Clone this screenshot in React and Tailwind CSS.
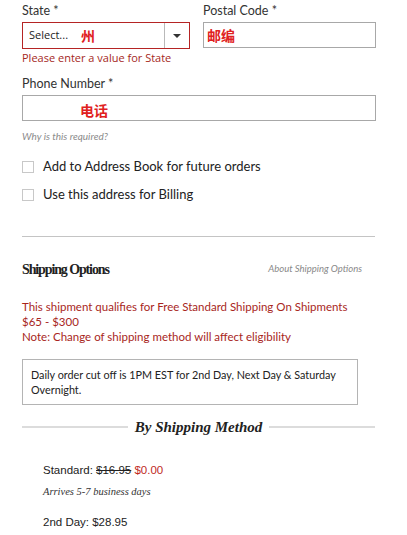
const gill = { fontFamily: 'Lato, "Open Sans", sans-serif' };

function Checkbox({ label }) {
  return (
    <label className="flex items-center h-[28px] gap-[9px]">
      <span className="w-[12px] h-[12px] border border-[#c8c8c8] bg-white shrink-0" />
      <span className="text-[13px] text-[#222]">{label}</span>
    </label>
  );
}

export default function App() {
  return (
    <div className="w-[407px] h-[535px] bg-white overflow-hidden pl-[22px] pr-[31px] font-['Open_Sans','Noto_Sans_CJK_SC',sans-serif]">
      {/* State / Postal code */}
      <div className="flex gap-[13px] pt-[3px]">
        <div className="w-[168px]">
          <div className="text-[12.5px] leading-[16px] text-[#333] mb-[3px]" style={gill}>State *</div>
          <div className="h-[27px] border border-[#b52424] flex items-center">
            <span className="pl-[6px] text-[11px] text-[#222]">Select...</span>
            <span className="ml-[13px] text-[14px] font-bold text-[#e02020] font-['Noto_Sans_CJK_SC',sans-serif]">州</span>
            <span className="ml-auto h-full w-[25px] border-l border-[#b9b9b9] flex items-center justify-center">
              <svg width="8" height="4" viewBox="0 0 8 4"><path d="M0 0h8L4 4z" fill="#333" /></svg>
            </span>
          </div>
          <div className="text-[11px] leading-[16px] text-[#a5281d] mt-[1px]">Please enter a value for State</div>
        </div>
        <div className="flex-1">
          <div className="text-[12.5px] leading-[16px] text-[#333] mb-[3px]" style={gill}>Postal Code *</div>
          <div className="h-[26px] border border-[#a8a8a8] flex items-center pl-[3px]">
            <span className="text-[14px] font-bold text-[#e02020] font-['Noto_Sans_CJK_SC',sans-serif]">邮编</span>
          </div>
        </div>
      </div>

      {/* Phone */}
      <div className="mt-[10px]">
        <div className="text-[12.5px] leading-[16px] text-[#333] mb-[3px]" style={gill}>Phone Number *</div>
        <div className="h-[26px] border border-[#a8a8a8] flex items-end pl-[57px]">
          <span className="text-[14px] font-bold text-[#e02020] leading-[20px] font-['Noto_Sans_CJK_SC',sans-serif]">电话</span>
        </div>
        <div className="mt-[8px] text-[10px] leading-[14px] italic text-[#8a8a8a]" style={gill}>Why is this required?</div>
      </div>

      {/* Checkboxes */}
      <div className="mt-[10px]" style={gill}>
        <Checkbox label="Add to Address Book for future orders" />
        <Checkbox label="Use this address for Billing" />
      </div>

      <div className="mt-[27px] h-px bg-[#c4c4c4] w-[353px]" />

      {/* Shipping options header */}
      <div className="flex items-center justify-between mt-[22px] pr-[14px]">
        <h2 className="text-[14px] font-bold text-[#222] tracking-[-0.08em] font-['Liberation_Serif',serif]">Shipping Options</h2>
        <a className="text-[9.5px] italic text-[#888]" style={gill}>About Shipping Options</a>
      </div>

      <div className="mt-[19px] text-[11.5px] leading-[15px] text-[#a8261c]" style={gill}>
        This shipment qualifies for Free Standard Shipping On Shipments<br />
        $65 - $300<br />
        Note: Change of shipping method will affect eligibility
      </div>

      <div className="mt-[15px] w-[336px] border border-[#b4b4b4] px-[8px] py-[7px] text-[10.8px] leading-[15px] text-[#222] whitespace-nowrap" style={gill}>
        Daily order cut off is 1PM EST for 2nd Day, Next Day &amp; Saturday<br />
        Overnight.
      </div>

      {/* By Shipping Method divider */}
      <div className="flex items-center mt-[11px] w-[353px]">
        <div className="flex-1 h-[2px] bg-[#dcdcdc]" />
        <span className="px-[7px] text-[15px] font-bold italic text-[#222] font-['Liberation_Serif',serif]">By Shipping Method</span>
        <div className="flex-1 h-[2px] bg-[#dcdcdc]" />
      </div>

      <div className="pl-[21px] mt-[23px]">
        <div className="text-[11.5px] text-[#222] leading-[16px] font-['Liberation_Sans',sans-serif]">
          Standard: <span className="line-through">$16.95</span> <span className="text-[#c0281e]">$0.00</span>
        </div>
        <div className="mt-[6px] text-[10.5px] italic text-[#333] font-['Liberation_Serif',serif]">Arrives 5-7 business days</div>
        <div className="mt-[15px] text-[11.5px] text-[#222] leading-[16px] font-['Liberation_Sans',sans-serif]">2nd Day: $28.95</div>
      </div>
    </div>
  );
}
